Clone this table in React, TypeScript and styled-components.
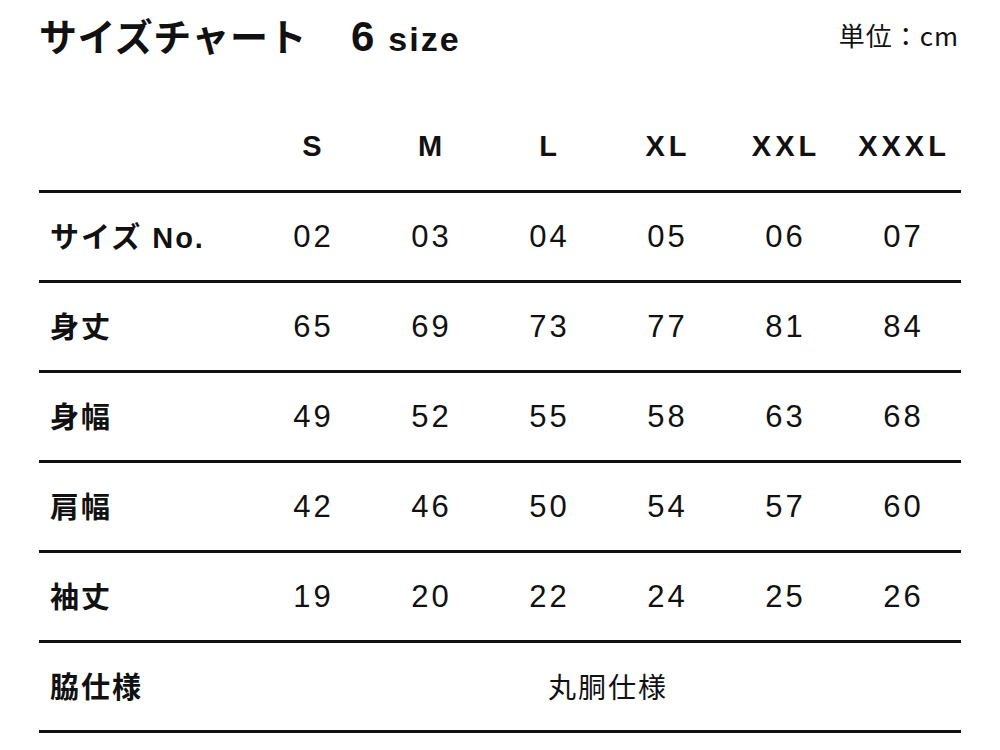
import styled, { createGlobalStyle } from "styled-components";

const GlobalStyle = createGlobalStyle`
    body {
        margin: 0;
        background: #ffffff;
        color: #111111;
        font-family: "Liberation Sans", "Noto Sans CJK JP", sans-serif;
    }
`;

const sizes = ["S", "M", "L", "XL", "XXL", "XXXL"];

const rows = [
    { label: "サイズ No.", values: ["02", "03", "04", "05", "06", "07"] },
    { label: "身丈", values: ["65", "69", "73", "77", "81", "84"] },
    { label: "身幅", values: ["49", "52", "55", "58", "63", "68"] },
    { label: "肩幅", values: ["42", "46", "50", "54", "57", "60"] },
    { label: "袖丈", values: ["19", "20", "22", "24", "25", "26"] },
];

const Page = styled.div`
    width: 1000px;
    height: 750px;
    box-sizing: border-box;
    padding: 0 39px;
    overflow: hidden;
`;

const TitleBar = styled.div`
    height: 68px;
    display: flex;
    justify-content: space-between;
    align-items: center;
    margin-bottom: 36px;
`;

const Title = styled.div`
    display: flex;
    align-items: baseline;
    font-weight: 700;
`;

const TitleJa = styled.span`
    font-size: 38px;
    font-family: "Noto Sans CJK JP", sans-serif;
    letter-spacing: 0.5px;
`;

const Count = styled.span`
    margin-left: 44px;
    font-size: 42px;
`;

const CountUnit = styled.span`
    margin-left: 14px;
    font-size: 34px;
    letter-spacing: 2px;
`;

const Unit = styled.div`
    font-size: 26px;
    letter-spacing: 1px;
    margin-right: 2px;
    font-family: "Noto Sans CJK JP", sans-serif;
    font-weight: 400;
`;

const Row = styled.div<{ $head?: boolean }>`
    display: grid;
    grid-template-columns: 214px repeat(6, 118px);
    height: ${(p) => (p.$head ? 89 : 90)}px;
    box-sizing: border-box;
    border-bottom: 3px solid #111111;
    align-items: center;
`;

const HeadCell = styled.div`
    text-align: center;
    font-size: 29px;
    font-weight: 700;
    letter-spacing: 4px;
    text-indent: 4px;
    padding-bottom: 2px;
`;

const Label = styled.div`
    padding-left: 11px;
    padding-bottom: 4px;
    font-size: 29px;
    font-weight: 700;
    letter-spacing: 2px;
`;

const Value = styled.div`
    text-align: center;
    font-size: 31px;
    letter-spacing: 3px;
    text-indent: 3px;
`;

const Spanned = styled.div`
    grid-column: 2 / span 6;
    text-align: center;
    padding-bottom: 2px;
    font-size: 28px;
    letter-spacing: 2px;
    text-indent: 2px;
`;

export default function App() {
    return (
        <Page>
            <GlobalStyle />
            <TitleBar>
                <Title>
                    <TitleJa>サイズチャート</TitleJa>
                    <Count>6</Count>
                    <CountUnit>size</CountUnit>
                </Title>
                <Unit>単位：cm</Unit>
            </TitleBar>
            <Row $head>
                <div />
                {sizes.map((s) => (
                    <HeadCell key={s}>{s}</HeadCell>
                ))}
            </Row>
            {rows.map((r) => (
                <Row key={r.label}>
                    <Label>{r.label}</Label>
                    {r.values.map((v, i) => (
                        <Value key={i}>{v}</Value>
                    ))}
                </Row>
            ))}
            <Row>
                <Label>脇仕様</Label>
                <Spanned>丸胴仕様</Spanned>
            </Row>
        </Page>
    );
}
